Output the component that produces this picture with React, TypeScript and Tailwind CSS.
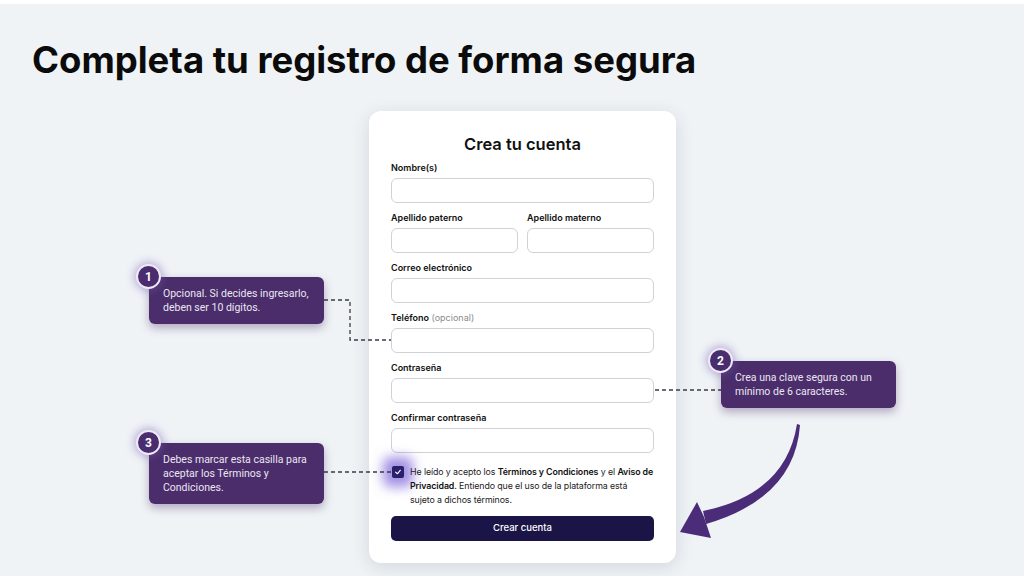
import React from "react";

function Field({ label, extra }: { label: string; extra?: string }) {
  return (
    <div className="flex flex-col gap-[3px]">
      <div className="text-[9px] leading-[14px] font-semibold text-[#111]">
        {label}
        {extra && <span className="font-normal text-[#8a8a8a]"> {extra}</span>}
      </div>
      <div className="h-[25px] rounded-[6px] border border-[#cfd2d6] bg-white" />
    </div>
  );
}

function Badge({ n }: { n: string }) {
  return (
    <div className="absolute -left-[13px] -top-[13px] w-[25px] h-[25px] rounded-full bg-[#4a2d6e] border-[2px] border-[#efeaf6] shadow-[0_0_8px_2px_rgba(120,90,180,0.45)] flex items-center justify-center text-white text-[12px] font-bold" style={{ fontFamily: "Roboto, sans-serif" }}>
      {n}
    </div>
  );
}

function Callout({ n, lines, className }: { n: string; lines: string[]; className: string }) {
  return (
    <div className={`absolute w-[175px] rounded-[6px] bg-[#4a2d6a] px-[14px] pt-[10px] pb-[9px] shadow-[0_4px_10px_rgba(60,30,90,0.35)] ${className}`}>
      <Badge n={n} />
      <div className="text-[10.5px] leading-[14px] text-[#ece6f3]" style={{ fontFamily: "Roboto, sans-serif" }}>
        {lines.map((l, i) => (
          <div key={i}>{l}</div>
        ))}
      </div>
    </div>
  );
}

export default function App() {
  return (
    <div className="relative w-[1024px] h-[576px] overflow-hidden bg-[#eff3f6] border-t-[4px] border-white flex flex-col" style={{ fontFamily: "Inter, sans-serif" }}>
      <h1 className="mt-[34px] ml-[32px] text-[36.5px] leading-[44px] font-bold text-[#0b0b0b]">
        Completa tu registro de forma segura
      </h1>

      <div className="mt-[29px] pl-[369px]">
        <div className="w-[307px] rounded-[12px] bg-white px-[22px] pt-[22px] pb-[22px] shadow-[0_4px_18px_rgba(40,50,70,0.14)]">
          <div className="text-center text-[16.5px] leading-[22px] font-semibold text-[#111]">Crea tu cuenta</div>
          <div className="mt-[6px] flex flex-col gap-[8px]">
            <Field label="Nombre(s)" />
            <div className="grid grid-cols-2 gap-[9px]">
              <Field label="Apellido paterno" />
              <Field label="Apellido materno" />
            </div>
            <Field label="Correo electrónico" />
            <Field label="Teléfono" extra="(opcional)" />
            <Field label="Contraseña" />
            <Field label="Confirmar contraseña" />
          </div>
          <div className="mt-[12px] flex items-start gap-[6px]">
            <div className="mt-[1px] ml-[1px] w-[12px] h-[12px] shrink-0 rounded-[2px] bg-[#2a1f6b] flex items-center justify-center shadow-[0_0_12px_9px_rgba(100,70,210,0.6)]">
              <svg width="8" height="8" viewBox="0 0 10 10">
                <path d="M2 5.2 L4.2 7.2 L8 2.8" stroke="white" strokeWidth="1.4" fill="none" strokeLinecap="round" strokeLinejoin="round" />
              </svg>
            </div>
            <p className="text-[8.8px] leading-[14px] text-[#222] tracking-[-0.01em]">
              He leído y acepto los <span className="font-semibold text-[#111]">Términos y Condiciones</span> y el{" "}
              <span className="font-semibold text-[#111]">Aviso de Privacidad</span>. Entiendo que el uso de la plataforma está sujeto a dichos términos.
            </p>
          </div>
          <button className="mt-[9px] w-full h-[25px] rounded-[5px] bg-[#1b1447] text-white text-[9.5px] font-medium">
            Crear cuenta
          </button>
        </div>
      </div>

      <svg className="absolute left-0 top-[-4px] pointer-events-none" width="1024" height="576" viewBox="0 0 1024 576">
        <g stroke="#3d3a4a" strokeWidth="1.3" strokeDasharray="4 3" fill="none">
          <path d="M324 300 H350 V340 H391" />
          <path d="M655 390 H721" />
          <path d="M324 472 H391" />
        </g>
        <path d="M797 424 Q 786 494 703 511 L 706 524 Q 795 498 800 425 Z" fill="#4b2c78" />
        <path d="M680 532 L 697 502 L 704 517 L 711 538 Z" fill="#4b2c78" />
      </svg>

      <Callout n="1" className="left-[149px] top-[273px]" lines={["Opcional. Si decides ingresarlo,", "deben ser 10 dígitos."]} />
      <Callout n="2" className="left-[721px] top-[357px]" lines={["Crea una clave segura con un", "mínimo de 6 caracteres."]} />
      <Callout n="3" className="left-[149px] top-[439px]" lines={["Debes marcar esta casilla para", "aceptar los Términos y", "Condiciones."]} />
    </div>
  );
}
